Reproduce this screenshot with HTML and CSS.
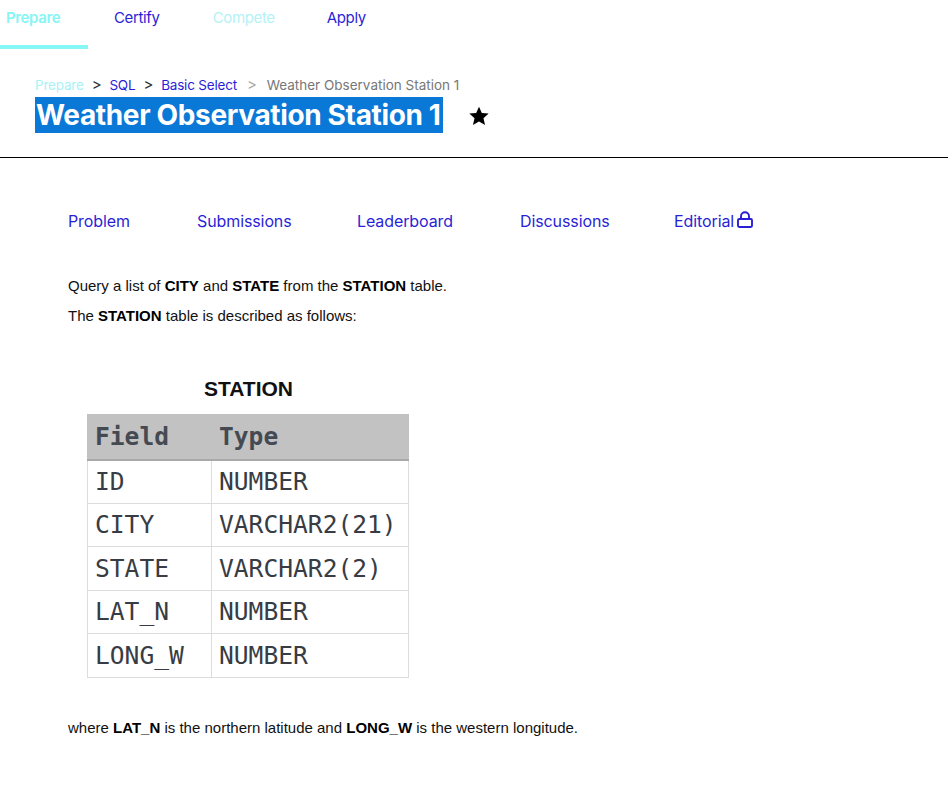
FILE: index.html
```html
<!DOCTYPE html>
<html>
<head>
<meta charset="utf-8">
<link rel="stylesheet" href="styles.css">
</head>
<body>
<nav class="topnav">
  <a class="nav-item active">Prepare</a>
  <a class="nav-item certify">Certify</a>
  <a class="nav-item compete">Compete</a>
  <a class="nav-item apply">Apply</a>
</nav>
<header class="head">
  <div class="crumbs">
    <span class="crumb-prep">Prepare</span>
    <span class="chev">&gt;</span>
    <span class="crumb-link">SQL</span>
    <span class="chev">&gt;</span>
    <span class="crumb-link">Basic Select</span>
    <span class="chev light">&gt;</span>
    <span class="crumb-cur">Weather Observation Station 1</span>
  </div>
  <div class="title-row">
    <h1 class="title">Weather Observation Station 1</h1>
    <svg class="star" viewBox="0 0 24 24" width="22" height="22"><path d="M12 1.8l3.1 6.9 7.4.7-5.6 5 1.7 7.4L12 17.9l-6.6 3.9 1.7-7.4-5.6-5 7.4-.7z" fill="#000"/></svg>
  </div>
</header>
<main class="content">
  <div class="tabs">
    <a class="tab">Problem</a>
    <a class="tab">Submissions</a>
    <a class="tab">Leaderboard</a>
    <a class="tab">Discussions</a>
    <a class="tab">Editorial <svg class="lock" viewBox="0 0 18 17" width="18" height="17"><path d="M5 8V5.2a4 4 0 0 1 8 0V8" fill="none" stroke="#2a1fd6" stroke-width="1.9"/><rect x="2" y="8" width="14" height="8" rx="1.2" fill="none" stroke="#2a1fd6" stroke-width="1.9"/></svg></a>
  </div>
  <p class="txt first">Query a list of <b>CITY</b> and <b>STATE</b> from the <b>STATION</b> table.</p>
  <p class="txt">The <b>STATION</b> table is described as follows:</p>
  <div class="figure">
    <div class="caption">STATION</div>
    <table class="station">
      <thead><tr><th class="c1">Field</th><th>Type</th></tr></thead>
      <tbody>
        <tr><td class="c1">ID</td><td>NUMBER</td></tr>
        <tr><td class="c1">CITY</td><td>VARCHAR2(21)</td></tr>
        <tr><td class="c1">STATE</td><td>VARCHAR2(2)</td></tr>
        <tr><td class="c1">LAT_N</td><td>NUMBER</td></tr>
        <tr><td class="c1">LONG_W</td><td>NUMBER</td></tr>
      </tbody>
    </table>
  </div>
  <p class="txt last">where <b>LAT_N</b> is the northern latitude and <b>LONG_W</b> is the western longitude.</p>
</main>
</body>
</html>
```
FILE: styles.css
```css
* { box-sizing: border-box; }
body {
  margin: 0;
  background: #fff;
  font-family: Inter, "Liberation Sans", Arial, sans-serif;
  color: #000;
}
a { text-decoration: none; cursor: pointer; }

.topnav {
  display: flex;
  height: 50px;
  align-items: stretch;
}
.nav-item {
  font-size: 15px;
  letter-spacing: -0.35px;
  padding-top: 9px;
  line-height: 18px;
  color: #2a1fd6;
}
.nav-item.active {
  width: 88px;
  padding-left: 6px;
  color: #86f5f5;
  font-weight: 600;
  border-bottom: 4px solid #86f7f7;
  height: 49px;
  margin-right: 26px;
}
.nav-item.certify { margin-right: 53px; }
.nav-item.compete { color: #b4f2f6; margin-right: 52px; }

.head {
  padding: 26px 0 0 35px;
  border-bottom: 1px solid #000;
  height: 108px;
}
.crumbs {
  display: flex;
  align-items: center;
  gap: 8px;
  font-size: 13.5px;
  letter-spacing: -0.2px;
  line-height: 18px;
  color: #777;
}
.crumb-prep { color: #a8f2f6; }
.crumb-link { color: #2a1fd6; }
.chev { color: #333; font-size: 15px; }
.chev.light { color: #aaa; margin: 0 2px; }
.crumb-cur { color: #777; letter-spacing: 0; }

.title-row {
  display: flex;
  align-items: center;
  margin-top: 3px;
}
.title {
  margin: 0;
  font-size: 28px;
  font-weight: 700;
  line-height: 36px;
  color: #fff;
  background: #0a78d7;
  padding: 0 2px 0 1px;
  letter-spacing: -0.35px;
}
.star { margin-left: 25px; margin-top: 2px; }

.content { padding: 52px 0 0 68px; }
.tabs {
  display: flex;
  gap: 0;
  font-size: 16px;
  letter-spacing: -0.1px;
  line-height: 22px;
}
.tab { color: #2a1fd6; display: flex; align-items: center; gap: 2px; }
.tab:nth-child(1) { width: 129px; }
.tab:nth-child(2) { width: 160px; }
.tab:nth-child(3) { width: 163px; }
.tab:nth-child(4) { width: 154px; }
.lock { margin-top: -4px; }

.txt {
  font-family: "Liberation Sans", Arial, sans-serif;
  font-size: 15px;
  line-height: 18px;
  margin: 0;
  color: #111;
}
.txt b { color: #000; }
.txt.first { margin-top: 45px; }
.txt + .txt { margin-top: 12px; }

.figure {
  margin: 52px 0 0 19px;
  width: 322px;
}
.caption {
  font-family: "Liberation Sans", Arial, sans-serif;
  font-weight: 700;
  font-size: 21px;
  text-align: center;
  line-height: 24px;
  margin-left: 1px;
  margin-bottom: 13px;
  color: #111;
}
.station {
  border-collapse: collapse;
  width: 322px;
  font-family: "DejaVu Sans Mono", "Liberation Mono", monospace;
  font-size: 24.6px;
  color: #383c44;
}
.station th, .station td {
  border: 1px solid #dcdcdc;
  text-align: left;
  padding: 0 0 0 7px;
  height: 43.5px;
  font-weight: 400;
}
.station th {
  background: #c2c2c2;
  font-weight: 700;
  color: #454a52;
  border-color: #c2c2c2;
  border-bottom: 2px solid #a9a9a9;
  height: 45px;
}
.station .c1 { width: 124px; }

.txt.last { margin-top: 41px; }
```
